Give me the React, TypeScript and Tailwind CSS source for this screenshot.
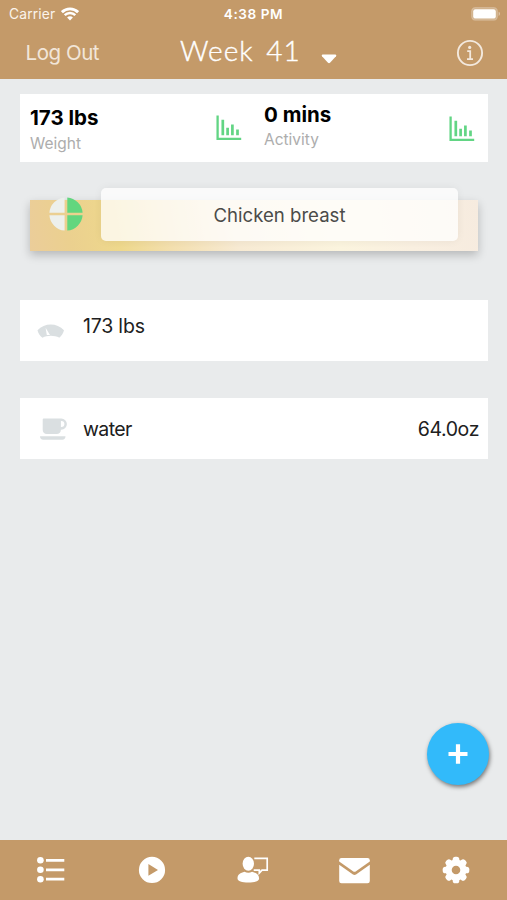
import type { ReactNode } from "react";

type IconProps = { className?: string };

function WifiIcon() {
  return (
    <svg width="18" height="14" viewBox="0 0 18 14" fill="none" stroke="#fff">
      <path d="M0.9 5.2a11.6 11.6 0 0 1 16.2 0" strokeWidth="2.9" />
      <path d="M3.7 8.2a7.5 7.5 0 0 1 10.6 0" strokeWidth="2.5" />
      <path d="M6.1 10.6a4 4 0 0 1 5.8 0L9 13.6z" fill="#fff" stroke="none" />
    </svg>
  );
}

function BatteryIcon() {
  return (
    <svg width="30" height="14" viewBox="0 0 30 14">
      <rect x="0.7" y="0.7" width="25.6" height="12.4" rx="3.6" fill="#fff" fillOpacity="0.2" stroke="#fff" strokeOpacity="0.25" strokeWidth="1.2" />
      <rect x="2.2" y="2.2" width="22.6" height="9.4" rx="2.2" fill="#fff" />
      <path d="M27.7 4.8v4.2c1.6-.7 1.6-3.5 0-4.2z" fill="#fff" fillOpacity="0.5" />
    </svg>
  );
}

function InfoIcon() {
  return (
    <svg width="28" height="28" viewBox="0 0 28 28" fill="none" stroke="#f3e9de">
      <circle cx="14" cy="14" r="12.1" strokeWidth="1.9" />
      <circle cx="13.7" cy="8.4" r="1.6" fill="#f3e9de" stroke="none" />
      <path d="M11.2 12.2h3v7.8M11 20.2h6" strokeWidth="1.8" />
    </svg>
  );
}

function ChartIcon({ className }: IconProps) {
  return (
    <svg className={className} width="26" height="26" viewBox="0 0 26 26" fill="none" stroke="#62d584">
      <path d="M1.6 0.5v23.3h23.6" strokeWidth="2.3" />
      <path d="M6.8 4.7v15.6M11.6 12.7v7.6M16.4 9.5v10.8M21.5 14.6v5.7" strokeWidth="2.7" />
    </svg>
  );
}

function PieIcon() {
  return (
    <svg width="34" height="34" viewBox="0 0 34 34">
      <path d="M15.6 0.4v15.3H0.4A16.8 16.8 0 0 1 15.6 0.4zM15.6 18.2v15.4A16.8 16.8 0 0 1 0.4 18.2z" fill="#edf0ec" />
      <path d="M18.3 0.4v15.3h15.3A16.8 16.8 0 0 0 18.3 0.4zM18.3 18.2v15.4a16.8 16.8 0 0 0 15.3-15.4z" fill="#62d67e" />
    </svg>
  );
}

function ScaleIcon() {
  return (
    <svg width="28" height="15" viewBox="0 0 28 15">
      <path d="M0.5 6.2C7.5-1.3 20-1.3 27 6.2c-.8 3-2.5 5.5-4.8 7.5-1.6-.8-2.5-1.2-4-1.4a18 18 0 0 0-8.8 0c-1.5.3-2.5.7-4 1.5C3 12 1.2 9.5.5 6.2z" fill="#dadfe1" />
      <path d="M8.6 3.8l1.2 7.2h3.2z" fill="#fff" />
    </svg>
  );
}

function CupIcon() {
  return (
    <svg width="28" height="23" viewBox="0 0 28 23">
      <path d="M2.7 1.5q0-1 1-1h17.6a5.6 5.6 0 0 1 0 11.2h-.4c-.2 2.9-1.8 4.3-4.3 4.3H6.9c-2.7 0-4.2-1.6-4.2-4.2zM20.9 3.1v6h.5a3 3 0 0 0 0-6z" fill="#dadfe1" fillRule="evenodd" />
      <path d="M0 18.3h25.5c0 2-1.2 3.5-3.2 3.5H3.2C1.2 21.8 0 20.3 0 18.3z" fill="#dadfe1" />
    </svg>
  );
}

function ListIcon() {
  return (
    <svg width="28" height="28" viewBox="0 0 28 28" fill="#fff">
      <circle cx="3.4" cy="4.3" r="3.3" />
      <circle cx="3.4" cy="13.8" r="3.3" />
      <circle cx="3.4" cy="23.2" r="3.3" />
      <path d="M9 2.9h18.3v2.8H9zM9 12.4h18.3v2.8H9zM9 21.8h18.3v2.8H9z" />
    </svg>
  );
}

function PlayIcon() {
  return (
    <svg width="28" height="28" viewBox="0 0 28 28">
      <path d="M14 .8a13.1 13.1 0 1 0 0 26.2 13.1 13.1 0 0 0 0-26.2zM10.4 8l9.6 5.9-9.6 5.9z" fill="#fff" fillRule="evenodd" />
    </svg>
  );
}

function CoachIcon() {
  return (
    <svg width="32" height="28" viewBox="0 0 32 28">
      <ellipse cx="11.3" cy="7.8" rx="5.7" ry="7" fill="#fff" />
      <path d="M.5 22.5c0-4 3-5.7 7-6.7q3.8 1.8 7.6 0c4 1 7 2.7 7 6.7 0 2.6-4.5 4-10.8 4S.5 25.1.5 22.5z" fill="#fff" />
      <path d="M17.3 2.4h12.9v11.7H25L22.3 17v-2.9h-5.6" fill="none" stroke="#fff" strokeWidth="1.7" />
    </svg>
  );
}

function MailIcon() {
  return (
    <svg width="31" height="27" viewBox="0 0 31 27" fill="#fff">
      <path d="M2.5 1h26q2.3 0 2.3 2.3v1.3L17 14.2q-1.5 1-3 0L.2 4.6V3.3Q.2 1 2.5 1z" />
      <path d="M.2 7.8L14 17.6q1.5.9 3 0L30.8 7.8v16.1q0 2.3-2.3 2.3h-26Q.2 26.2.2 23.9z" />
    </svg>
  );
}

function GearIcon() {
  return (
    <svg width="28" height="28" viewBox="-14 -14 28 28">
      <g fill="#fff">
        {[0, 45, 90, 135, 180, 225, 270, 315].map((angle) => (
          <rect key={angle} x="-3.3" y="-13.3" width="6.6" height="7" rx="2.6" transform={`rotate(${angle})`} />
        ))}
      </g>
      <circle r="7.4" fill="none" stroke="#fff" strokeWidth="6.2" />
    </svg>
  );
}

type StatProps = { value: string; label: string; className: string };

function Stat({ value, label, className }: StatProps) {
  return (
    <div className={className}>
      <p className="text-[20.5px] leading-6 font-bold text-black">{value}</p>
      <p className="mt-[3px] text-[15.5px] leading-5 text-[#adadad]">{label}</p>
    </div>
  );
}

function EntryCard({ icon, children }: { icon: ReactNode; children: ReactNode }) {
  return (
    <div className="flex h-[61px] bg-white">
      <div className="flex w-[63px] shrink-0 pl-[17px]">{icon}</div>
      <div className="flex flex-1 justify-between pr-[9px] text-[19.5px] leading-6 tracking-[-0.2px] text-[#202020]">
        {children}
      </div>
    </div>
  );
}

function App() {
  return (
    <div className="flex h-[900px] w-[507px] flex-col overflow-hidden bg-[#e9ebec] font-['Inter','Liberation_Sans',sans-serif] whitespace-nowrap">
      <header className="h-[79px] shrink-0 bg-[#c49a69] text-white">
        <div className="grid h-[28px] grid-cols-3 items-center px-[6px]">
          <div className="flex items-center gap-[6px] pl-[3px] text-[13.8px] tracking-[0.15px] text-[#fbf4ec]">
            <span>Carrier</span>
            <WifiIcon />
          </div>
          <span className="text-center text-[13.6px] font-semibold tracking-[0.55px]">4:38 PM</span>
          <div className="flex justify-end">
            <BatteryIcon />
          </div>
        </div>
        <div className="flex h-[50px] items-center pl-[25.5px]">
          <span className="w-[154.5px] text-[20.5px] tracking-[-0.45px] text-[#f2e6d9]">Log Out</span>
          <h1 className="w-[141px] pb-[6px] font-['Lato','Liberation_Sans',sans-serif] text-[28px] leading-8 font-light tracking-[1px] [word-spacing:4px] [-webkit-text-stroke:0.4px_white]">
            Week 41
          </h1>
          <svg className="mt-[11px]" width="16" height="10" viewBox="0 0 16 10">
            <path d="M1.5.5h13q1.5.5.5 1.7L9 8.8q-1 .8-2 0L1 2.2Q0 1 1.5.5z" fill="#fff" />
          </svg>
          <div className="ml-auto pr-[23.5px]">
            <InfoIcon />
          </div>
        </div>
      </header>

      <main className="relative flex-1 pt-[15px] pr-[19px] pl-5">
        <section className="grid h-[68px] grid-cols-[233px_235px] bg-white">
          <div className="flex justify-between pr-[11px] pl-[10px]">
            <Stat value="173 lbs" label="Weight" className="pt-[12px] [&>p:last-child]:mt-1" />
            <ChartIcon className="mt-[21px]" />
          </div>
          <div className="flex justify-between pr-[13px] pl-[11px]">
            <Stat value="0 mins" label="Activity" className="pt-[9px]" />
            <ChartIcon className="mt-[22px]" />
          </div>
        </section>

        <section className="mx-[10px] mt-[38px] flex h-[51px] bg-[linear-gradient(80deg,#ebcd9a_0%,#ebd08f_9%,#eed88c_20%,#f3dfae_31%,#f7ead3_46%,#fbf4de_68%,#f9efe0_84%,#f6ebdf_100%)] shadow-[0_4px_9px_rgba(0,0,0,0.22)]">
          <div className="mt-[-3px] ml-[19px]">
            <PieIcon />
          </div>
          <div className="-mt-3 ml-[18px] flex h-[53px] w-[357px] items-center justify-center rounded-[5px] bg-white/75 pt-[2px] text-[18.6px] text-[#4b4b49] shadow-[0_0_9px_rgba(0,0,0,0.06)]">
            Chicken breast
          </div>
        </section>

        <section className="mt-[49px] flex flex-col gap-[37px]">
          <EntryCard icon={<div className="mt-[24px]"><ScaleIcon /></div>}>
            <span className="mt-[14px]">173 lbs</span>
          </EntryCard>
          <EntryCard icon={<div className="mt-[20px] ml-[3px]"><CupIcon /></div>}>
            <span className="mt-[19px] tracking-[-0.6px]">water</span>
            <span className="mt-[19px] tracking-[-0.4px]">64.0oz</span>
          </EntryCard>
        </section>

        <button
          aria-label="Add entry"
          className="absolute right-[18px] bottom-[55px] flex size-[62px] items-center justify-center rounded-full bg-[#32bafa] shadow-[1px_2px_4px_rgba(0,0,0,0.5)]"
        >
          <svg width="20" height="20" viewBox="0 0 20 20">
            <path d="M10 .3v19.4M.5 10h19" stroke="#fff" strokeWidth="4.2" />
          </svg>
        </button>
      </main>

      <nav className="grid h-[60.5px] shrink-0 grid-cols-5 items-center justify-items-center bg-[#c49a69] pt-px">
        <ListIcon />
        <PlayIcon />
        <CoachIcon />
        <MailIcon />
        <GearIcon />
      </nav>
    </div>
  );
}

export default App;
